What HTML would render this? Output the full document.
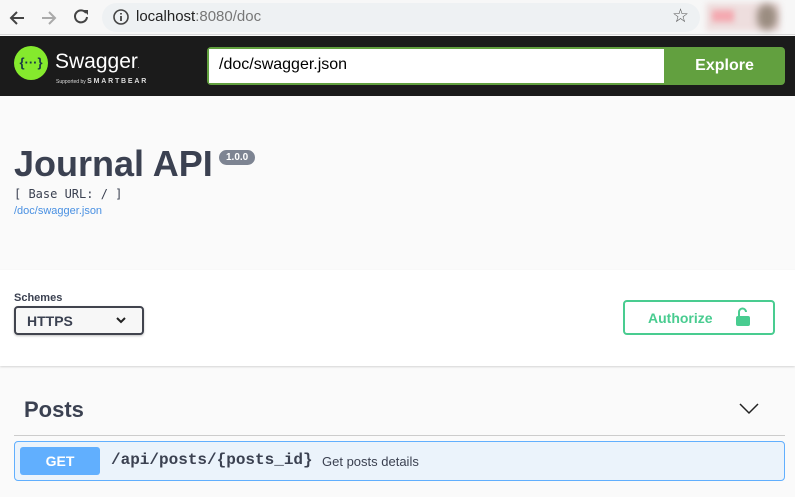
<!DOCTYPE html>
<html><head><style>
*{margin:0;padding:0;box-sizing:border-box}
body{width:795px;height:497px;overflow:hidden;background:#fafafa;font-family:"Liberation Sans",sans-serif;position:relative}
.abs{position:absolute}
</style></head><body>
<div class="abs" style="left:0;top:0;width:795px;height:35px;background:#f7f7f7;border-bottom:1px solid #d8d8d8"></div>
<div class="abs" style="left:102px;top:3px;width:598px;height:29px;background:#eef1f3;border-radius:15px"></div>
<svg class="abs" style="left:8px;top:8px" width="20" height="20" viewBox="0 0 20 20"><path d="M16 10H4M9 4l-6 6 6 6" stroke="#444" stroke-width="2" fill="none"/></svg>
<svg class="abs" style="left:38px;top:8px" width="20" height="20" viewBox="0 0 20 20"><path d="M4 10h12M11 4l6 6-6 6" stroke="#aaa" stroke-width="2" fill="none"/></svg>
<svg class="abs" style="left:71px;top:7px" width="20" height="20" viewBox="0 0 20 20"><path d="M15 6A6 6 0 1 0 16 10" stroke="#444" stroke-width="2" fill="none"/><path d="M12 3h5v5z" fill="#444"/></svg>
<svg class="abs" style="left:112px;top:8px" width="18" height="18" viewBox="0 0 18 18"><circle cx="9" cy="9" r="7" stroke="#444" stroke-width="1.6" fill="none"/><path d="M9 8v5M9 5v1.5" stroke="#444" stroke-width="1.8"/></svg>
<div class="abs" style="left:136px;top:8px;font-size:15px;color:#222">localhost<span style="color:#777">:8080/doc</span></div>
<div class="abs" style="left:672px;top:5px;font-size:19px;color:#555">☆</div>
<div class="abs" style="left:706px;top:3px;width:74px;height:28px;background:#eedede;filter:blur(3px)"></div>
<div class="abs" style="left:712px;top:10px;width:22px;height:12px;background:#f3a9b0;filter:blur(3px)"></div>
<div class="abs" style="left:757px;top:4px;width:20px;height:26px;background:#9a8c80;filter:blur(4px);border-radius:10px"></div>
<div class="abs" style="left:0;top:36px;width:795px;height:60px;background:#1b1b1b"></div>
<div class="abs" style="left:14px;top:46px;width:34px;height:34px;border-radius:50%;background:#85ea2d;color:#173647;font-weight:bold;font-size:13px;text-align:center;line-height:33px">{···}</div>
<div class="abs" style="left:55px;top:50px;font-size:21px;color:#fff">Swagger<span style="font-size:6px">.</span></div>
<div class="abs" style="left:56px;top:78px;font-size:5px;color:#ddd;white-space:nowrap">Supported by <b style="font-size:7px;letter-spacing:1.8px">SMARTBEAR</b></div>
<div class="abs" style="left:207px;top:47px;width:578px;height:38px;background:#62a03f;border-radius:4px"></div>
<div class="abs" style="left:209px;top:49px;width:455px;height:34px;background:#fff;font-size:16px;color:#000;padding:7px 10px">/doc/swagger.json</div>
<div class="abs" style="left:664px;top:47px;width:121px;height:38px;color:#fff;font-weight:bold;font-size:16px;text-align:center;line-height:38px">Explore</div>
<div class="abs" style="left:14px;top:143px;font-size:36px;font-weight:bold;color:#3b4151">Journal API</div>
<div class="abs" style="left:219px;top:150px;height:15px;padding:0 7px;background:#7d8492;border-radius:8px;color:#fff;font-size:10px;font-weight:bold;line-height:15px">1.0.0</div>
<div class="abs" style="left:14px;top:187px;font-family:'DejaVu Sans Mono',monospace;font-size:12px;color:#3b4151">[ Base URL: / ]</div>
<div class="abs" style="left:14px;top:205px;font-size:11px;color:#4990e2">/doc/swagger.json</div>
<div class="abs" style="left:0;top:270px;width:795px;height:96px;background:#fff;box-shadow:0 1px 2px rgba(0,0,0,.15)"></div>
<div class="abs" style="left:14px;top:292px;font-size:11px;font-weight:bold;color:#3b4151">Schemes</div>
<div class="abs" style="left:14px;top:306px;width:130px;height:29px;border:2px solid #41444e;border-radius:4px;background:#f7f7f7;box-shadow:0 1px 2px rgba(0,0,0,.25);font-size:14px;font-weight:bold;color:#3b4151;padding:5px 11px">HTTPS</div>
<svg class="abs" style="left:116px;top:316px" width="10" height="8" viewBox="0 0 10 8"><path d="M1 2l4 4 4-4" stroke="#222" stroke-width="2" fill="none"/></svg>
<div class="abs" style="left:623px;top:300px;width:152px;height:35px;border:2px solid #49cc90;border-radius:4px;background:#fff"></div>
<div class="abs" style="left:648px;top:310px;font-size:14px;font-weight:bold;color:#49cc90">Authorize</div>
<svg class="abs" style="left:735px;top:307px" width="16" height="20" viewBox="0 0 16 20"><path d="M4 9V5a3.5 3.5 0 0 1 7 0" stroke="#49cc90" stroke-width="2" fill="none"/><rect x="1" y="9" width="14" height="10" rx="2" fill="#49cc90"/></svg>
<div class="abs" style="left:24px;top:397px;font-size:22px;font-weight:bold;color:#3b4151">Posts</div>
<svg class="abs" style="left:739px;top:403px" width="20" height="12" viewBox="0 0 20 12"><path d="M1 1l9 9 9-9" stroke="#222" stroke-width="1.5" fill="none"/></svg>
<div class="abs" style="left:14px;top:435px;width:771px;height:1px;background:#ccc"></div>
<div class="abs" style="left:14px;top:441px;width:771px;height:40px;background:#ebf3fb;border:1px solid #61affe;border-radius:4px"></div>
<div class="abs" style="left:20px;top:447px;width:80px;height:28px;background:#61affe;border-radius:3px;color:#fff;font-weight:bold;font-size:14px;text-align:center;line-height:28px">GET</div>
<div class="abs" style="left:111px;top:451px;font-family:'Liberation Mono',monospace;font-weight:bold;font-size:16px;color:#3b4151">/api/posts/{posts_id}</div>
<div class="abs" style="left:322px;top:454px;font-size:13px;color:#3b4151">Get posts details</div>
</body></html>
